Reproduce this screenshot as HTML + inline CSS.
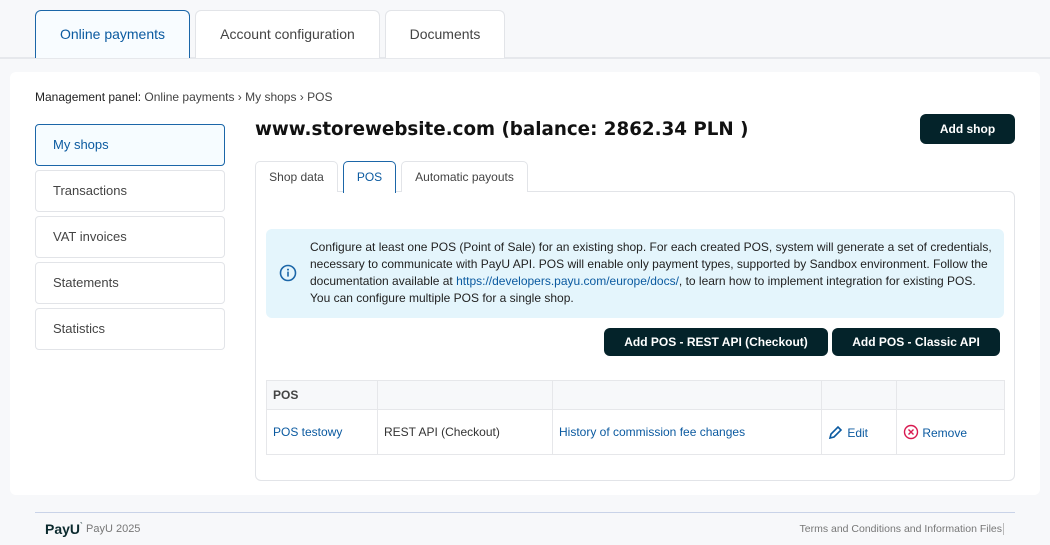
<!DOCTYPE html>
<html><head><style>
*{box-sizing:border-box;margin:0;padding:0}
body{width:1050px;height:545px;background:#f7f8fa;font-family:"Liberation Sans",Arial,sans-serif;position:relative;overflow:hidden;color:#333}
.abs{position:absolute}
.tab{position:absolute;top:10px;height:48px;border:1px solid #e2e4e8;border-bottom:none;border-radius:6px 6px 0 0;background:#fff;font-size:14px;color:#444;text-align:center;line-height:47px}
.card{position:absolute;left:10px;top:72px;width:1030px;height:423px;background:#fff;border-radius:6px}
.side{position:absolute;left:35px;width:190px;height:42px;border:1px solid #e2e4e8;border-radius:4px;font-size:13px;color:#444;padding-left:17px;line-height:40px;background:#fff}
.st{position:absolute;top:161px;height:31px;border:1px solid #e2e4e8;border-bottom:none;border-radius:5px 5px 0 0;font-size:12px;color:#444;text-align:center;line-height:31px;background:#fff}
.btn{position:absolute;background:#04232a;color:#fff;font-weight:bold;font-size:12px;border-radius:6px;text-align:center}
a{color:#0b5aa0;text-decoration:none}
td{border:1px solid #e6e7ea;font-size:12px;padding:0 6px;vertical-align:middle}
</style></head><body>
<div class="abs" style="left:0;top:57px;width:1050px;height:2px;background:#e6e8ec"></div>
<div class="tab" style="left:35px;width:155px;border-color:#1b66a8;color:#0b5aa0;background:#f8fcff">Online payments</div>
<div class="tab" style="left:195px;width:185px">Account configuration</div>
<div class="tab" style="left:385px;width:120px">Documents</div>
<div class="card"></div>
<div class="abs" style="left:35px;top:90px;font-size:12px;color:#222">Management panel: <span style="color:#444">Online payments › My shops › POS</span></div>
<div class="side" style="top:124px;border-color:#1b66a8;background:#f6fcff;color:#0b5aa0">My shops</div>
<div class="side" style="top:170px">Transactions</div>
<div class="side" style="top:216px">VAT invoices</div>
<div class="side" style="top:262px">Statements</div>
<div class="side" style="top:308px">Statistics</div>
<div class="abs" style="left:255px;top:119px;font-family:'DejaVu Sans',sans-serif;font-weight:bold;font-size:18.3px;color:#111">www.storewebsite.com (balance: 2862.34 PLN )</div>
<div class="btn" style="left:920px;top:114px;width:95px;height:30px;line-height:30px">Add shop</div>
<div class="abs" style="left:255px;top:191px;width:760px;height:290px;border:1px solid #e2e4e8;border-radius:0 6px 6px 6px"></div>
<div class="st" style="left:255px;width:83px">Shop data</div>
<div class="st" style="left:343px;width:53px;border-color:#1b66a8;color:#0b5aa0;height:32px">POS</div>
<div class="st" style="left:401px;width:127px">Automatic payouts</div>
<div class="abs" style="left:266px;top:229px;width:738px;height:89px;background:#e4f5fc;border-radius:6px"></div>
<svg class="abs" style="left:279px;top:264px" width="18" height="18" viewBox="0 0 18 18"><circle cx="9" cy="9" r="7.5" fill="none" stroke="#1b66a8" stroke-width="1.6"/><circle cx="9" cy="5.6" r="1" fill="#1b66a8"/><rect x="8.2" y="7.6" width="1.6" height="5" fill="#1b66a8"/></svg>
<div class="abs" style="left:310px;top:239px;width:685px;font-size:12px;line-height:17px;color:#222">Configure at least one POS (Point of Sale) for an existing shop. For each created POS, system will generate a set of credentials, necessary to communicate with PayU API. POS will enable only payment types, supported by Sandbox environment. Follow the documentation available at <a>https://developers.payu.com/europe/docs/</a>, to learn how to implement integration for existing POS. You can configure multiple POS for a single shop.</div>
<div class="btn" style="left:604px;top:328px;width:224px;height:28px;line-height:28px">Add POS - REST API (Checkout)</div>
<div class="btn" style="left:832px;top:328px;width:168px;height:28px;line-height:28px">Add POS - Classic API</div>
<table class="abs" style="left:266px;top:380px;width:739px;border-collapse:collapse">
<tr style="height:29px;background:#f7f8fa"><td style="width:111px;font-weight:bold;color:#444">POS</td><td style="width:175px"></td><td style="width:269px"></td><td style="width:75px"></td><td></td></tr>
<tr style="height:45px"><td><a>POS testowy</a></td><td>REST API (Checkout)</td><td><a>History of commission fee changes</a></td><td><a><svg width="16" height="14" viewBox="0 0 16 14" style="vertical-align:-2px"><path d="M2 13l1-4 7-7 3 3-7 7z" fill="none" stroke="#0b5aa0" stroke-width="1.6"/></svg> Edit</a></td><td><a><svg width="16" height="16" viewBox="0 0 16 16" style="vertical-align:-3px"><circle cx="8" cy="8" r="6.5" fill="none" stroke="#d8194f" stroke-width="1.4"/><path d="M5.5 5.5l5 5M10.5 5.5l-5 5" stroke="#d8194f" stroke-width="1.4"/></svg> Remove</a></td></tr>
</table>
<div class="abs" style="left:35px;top:512px;width:980px;height:1px;background:#c9d3e8"></div>
<div class="abs" style="left:45px;top:521px;font-size:14px;font-weight:bold;color:#0b2a2e">PayU<sup style="font-size:8px">`</sup></div>
<div class="abs" style="left:86px;top:523px;font-size:11px;color:#777">PayU 2025</div>
<div class="abs" style="right:46px;top:523px;font-size:10.5px;color:#777;border-right:1px solid #bbb;padding-right:1px">Terms and Conditions and Information Files</div>
</body></html>
